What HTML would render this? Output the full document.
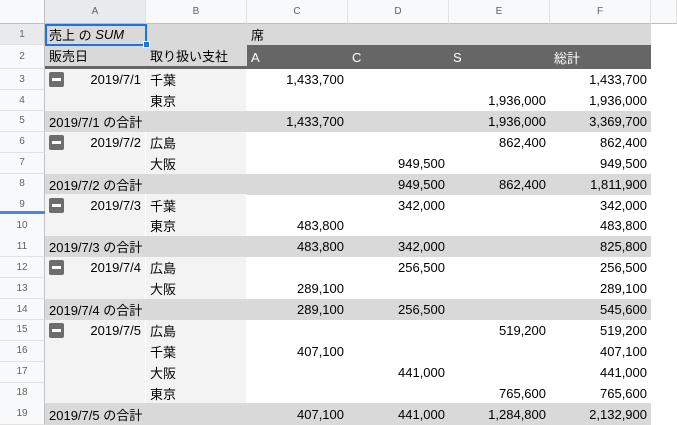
<!DOCTYPE html>
<html><head><meta charset="utf-8"><style>
*{box-sizing:border-box;margin:0;padding:0}
body{width:677px;height:420px;overflow:hidden;background:#fff;font-family:"Liberation Sans","Noto Sans CJK JP",sans-serif;font-size:13px;color:#000;position:relative}
.r{position:absolute;left:0;width:677px;display:flex;height:21.3px}
.r>div{height:100%;white-space:nowrap;overflow:hidden;padding:0 4px;display:flex;align-items:center}
.n{width:45px;flex:none;background:#f8f9fa;border-right:1px solid #c0c0c0;border-bottom:1px solid #e2e2e2;justify-content:center;font-size:10px;color:#5f6368;padding:0!important}
.c{width:101px;flex:none}
.g{width:26px;flex:none}
.R{justify-content:flex-end}
.hd .c,.hd .g{background:#f8f9fa;border-right:1px solid #e2e2e2;border-bottom:1px solid #c0c0c0;justify-content:center;font-size:10px;color:#5f6368}
.hd .n{border-bottom:1px solid #c0c0c0}
.lg{background:#f3f3f3;border-right:1px solid #fff}
.sub .c{background:#d9d9d9}
.dk{background:#666;color:#fff}
.m{width:15px;height:15px;background:#6d6d6d;border-radius:2px;position:relative;flex:none}
.m:after{content:"";position:absolute;left:3px;right:3px;top:6px;height:3px;background:#fff}
.A{justify-content:space-between}
</style></head><body>
<div class="r hd" style="top:0;height:24px"><div class="n" style="background:#f8f9fa"></div><div class="c" style="background:#e8eaed">A</div><div class="c">B</div><div class="c">C</div><div class="c">D</div><div class="c">E</div><div class="c">F</div><div class="g"></div></div>
<div class="r sub" style="top:24px;height:21px"><div class="n" style="background:#e8eaed">1</div><div class="c">売上 の&nbsp;<i>SUM</i></div><div class="c"></div><div class="c">席</div><div class="c"></div><div class="c"></div><div class="c"></div><div class="g"></div></div>
<div class="r" style="top:45px;height:24px"><div class="n">2</div><div class="c" style="background:#d9d9d9;border-bottom:3px solid #666">販売日</div><div class="c" style="background:#d9d9d9;border-bottom:3px solid #666">取り扱い支社</div><div class="c dk">A</div><div class="c dk">C</div><div class="c dk">S</div><div class="c dk">総計</div><div class="g"></div></div>
<div style="position:absolute;left:45px;top:24px;width:102px;height:22px;border:2px solid #1a73e8"></div>
<div style="position:absolute;left:143px;top:41px;width:7px;height:7px;background:#1a73e8;border:1px solid #fff"></div>

<div class="r" style="top:69px"><div class="n">3</div><div class="c lg A"><span class="m"></span>2019/7/1</div><div class="c lg">千葉</div><div class="c R">1,433,700</div><div class="c"></div><div class="c"></div><div class="c R">1,433,700</div><div class="g"></div></div>
<div class="r" style="top:89.9px"><div class="n">4</div><div class="c lg"></div><div class="c lg">東京</div><div class="c"></div><div class="c"></div><div class="c R">1,936,000</div><div class="c R">1,936,000</div><div class="g"></div></div>
<div class="r sub" style="top:110.8px"><div class="n">5</div><div class="c">2019/7/1 の合計</div><div class="c"></div><div class="c R">1,433,700</div><div class="c"></div><div class="c R">1,936,000</div><div class="c R">3,369,700</div><div class="g"></div></div>
<div class="r" style="top:131.7px"><div class="n">6</div><div class="c lg A"><span class="m"></span>2019/7/2</div><div class="c lg">広島</div><div class="c"></div><div class="c"></div><div class="c R">862,400</div><div class="c R">862,400</div><div class="g"></div></div>
<div class="r" style="top:152.6px"><div class="n">7</div><div class="c lg"></div><div class="c lg">大阪</div><div class="c"></div><div class="c R">949,500</div><div class="c"></div><div class="c R">949,500</div><div class="g"></div></div>
<div class="r sub" style="top:173.5px"><div class="n">8</div><div class="c">2019/7/2 の合計</div><div class="c"></div><div class="c"></div><div class="c R">949,500</div><div class="c R">862,400</div><div class="c R">1,811,900</div><div class="g"></div></div>
<div class="r" style="top:194.4px"><div class="n">9</div><div class="c lg A"><span class="m"></span>2019/7/3</div><div class="c lg">千葉</div><div class="c"></div><div class="c R">342,000</div><div class="c"></div><div class="c R">342,000</div><div class="g"></div></div>
<div class="r" style="top:215.3px"><div class="n">10</div><div class="c lg"></div><div class="c lg">東京</div><div class="c R">483,800</div><div class="c"></div><div class="c"></div><div class="c R">483,800</div><div class="g"></div></div>
<div class="r sub" style="top:236.2px"><div class="n">11</div><div class="c">2019/7/3 の合計</div><div class="c"></div><div class="c R">483,800</div><div class="c R">342,000</div><div class="c"></div><div class="c R">825,800</div><div class="g"></div></div>
<div class="r" style="top:257.1px"><div class="n">12</div><div class="c lg A"><span class="m"></span>2019/7/4</div><div class="c lg">広島</div><div class="c"></div><div class="c R">256,500</div><div class="c"></div><div class="c R">256,500</div><div class="g"></div></div>
<div class="r" style="top:278px"><div class="n">13</div><div class="c lg"></div><div class="c lg">大阪</div><div class="c R">289,100</div><div class="c"></div><div class="c"></div><div class="c R">289,100</div><div class="g"></div></div>
<div class="r sub" style="top:298.9px"><div class="n">14</div><div class="c">2019/7/4 の合計</div><div class="c"></div><div class="c R">289,100</div><div class="c R">256,500</div><div class="c"></div><div class="c R">545,600</div><div class="g"></div></div>
<div class="r" style="top:319.8px"><div class="n">15</div><div class="c lg A"><span class="m"></span>2019/7/5</div><div class="c lg">広島</div><div class="c"></div><div class="c"></div><div class="c R">519,200</div><div class="c R">519,200</div><div class="g"></div></div>
<div class="r" style="top:340.7px"><div class="n">16</div><div class="c lg"></div><div class="c lg">千葉</div><div class="c R">407,100</div><div class="c"></div><div class="c"></div><div class="c R">407,100</div><div class="g"></div></div>
<div class="r" style="top:361.6px"><div class="n">17</div><div class="c lg"></div><div class="c lg">大阪</div><div class="c"></div><div class="c R">441,000</div><div class="c"></div><div class="c R">441,000</div><div class="g"></div></div>
<div class="r" style="top:382.5px"><div class="n">18</div><div class="c lg"></div><div class="c lg">東京</div><div class="c"></div><div class="c"></div><div class="c R">765,600</div><div class="c R">765,600</div><div class="g"></div></div>
<div class="r sub" style="top:403.4px"><div class="n">19</div><div class="c">2019/7/5 の合計</div><div class="c"></div><div class="c R">407,100</div><div class="c R">441,000</div><div class="c R">1,284,800</div><div class="c R">2,132,900</div><div class="g"></div></div>
<div style="position:absolute;left:0;top:211px;width:45px;height:3px;background:#4a86e8"></div>
</body></html>
